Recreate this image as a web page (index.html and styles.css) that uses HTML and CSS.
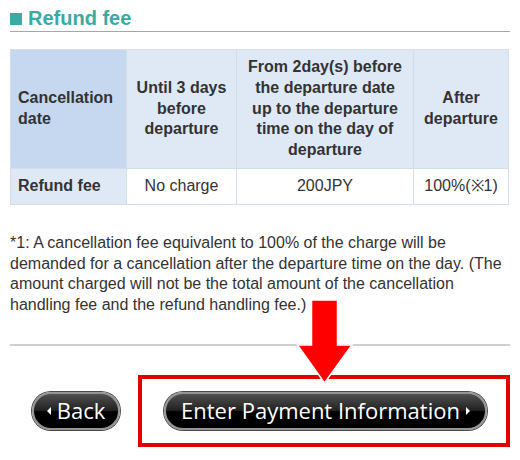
FILE: index.html
```html
<!DOCTYPE html>
<html>
<head>
  <meta charset="utf-8">
  <meta name="viewport" content="width=device-width, initial-scale=1">
  <title>Refund fee</title>
  <link rel="stylesheet" href="styles.css">
</head>
<body>
  <main class="page">
    <h2 class="section-title"><span class="mark"></span>Refund fee</h2>

    <table class="fee-table">
      <colgroup>
        <col class="c1">
        <col class="c2">
        <col class="c3">
        <col class="c4">
      </colgroup>
      <thead>
        <tr>
          <th class="label">Cancellation date</th>
          <th>Until 3 days before departure</th>
          <th>From 2day(s) before the departure date up to the departure time on the day of departure</th>
          <th>After departure</th>
        </tr>
      </thead>
      <tbody>
        <tr>
          <th class="label">Refund fee</th>
          <td>No charge</td>
          <td>200JPY</td>
          <td>100%(※1)</td>
        </tr>
      </tbody>
    </table>

    <p class="note">*1: A cancellation fee equivalent to 100% of the charge will be demanded for a cancellation after the departure time on the day. (The amount charged will not be the total amount of the cancellation handling fee and the refund handling fee.)</p>

    <hr class="divider">

    <div class="actions">
      <a class="btn btn-back" href="#"><span class="tri tri-left"></span>Back</a>
      <div class="highlight">
        <a class="btn btn-next" href="#">Enter Payment Information<span class="tri tri-right"></span></a>
      </div>
    </div>

    <!-- red pointer over the next button -->
    <svg class="pointer" width="56" height="84" viewBox="0 0 56 84">
      <path d="M14.5 0 H40.5 V45 H55 L27.5 83 L0.5 45 H14.5 Z" fill="#f00" stroke="#fff" stroke-width="1.5" stroke-linejoin="miter"/>
    </svg>
  </main>
</body>
</html>
```

FILE: styles.css
```css
* {
  box-sizing: border-box;
}

body {
  margin: 0;
  background: #fff;
  color: #333;
  font-family: "Liberation Sans", Arial, sans-serif;
  font-size: 16px;
}

.page {
  position: relative;
  padding: 0 10px;
}

.section-title {
  margin: 6px 0 0;
  padding-bottom: 1px;
  font-size: 20px;
  line-height: 24px;
  font-weight: bold;
  color: #3aaba3;
  border-bottom: 1px solid #a6a6a6;
}

.mark {
  display: inline-block;
  width: 12px;
  height: 12px;
  margin-right: 6px;
  background: #3aaba3;
}

.fee-table {
  margin-top: 17px;
  width: 498px;
  table-layout: fixed;
  border-collapse: collapse;
  line-height: 20.8px;
}

.c1 { width: 116px; }
.c2 { width: 110px; }
.c3 { width: 177px; }
.c4 { width: 95px; }

.fee-table th,
.fee-table td {
  border: 1px solid #d5dde8;
  padding: 7px 9px;
  text-align: center;
  vertical-align: middle;
}

.fee-table thead th {
  background: #dfe8f5;
}

.fee-table thead th.label {
  background: #c6d8f0;
}

.fee-table th.label {
  text-align: left;
  padding-left: 7px;
}

.fee-table tbody th.label {
  background: #dfe8f5;
}

.fee-table td {
  background: #fff;
}

.note {
  margin: 28px 0 0;
  line-height: 20.8px;
}

.divider {
  margin: 28px 0 0;
  border: 0;
  border-top: 2px solid #cfcfcf;
  height: 0;
}

.actions {
  display: flex;
  align-items: center;
  gap: 18px;
  margin-top: 29px;
  padding-left: 22px;
}

.highlight {
  flex: 1;
  border: 4px solid #e20000;
  padding: 13px 0 13px 22px;
}

.btn {
  display: flex;
  align-items: center;
  justify-content: center;
  gap: 6px;
  height: 38px;
  border: 2px solid #959595;
  border-radius: 19px;
  box-shadow: 0 0 0 1px #4a4a4a;
  background: linear-gradient(#505050, #222 48%, #000 52%, #000);
  color: #fff;
  text-decoration: none;
  font-family: "Open Sans", "DejaVu Sans", sans-serif;
  font-size: 22px;
  line-height: 1;
}

.btn-back {
  width: 88px;
  padding-bottom: 2px;
}

.btn-next {
  width: 323px;
  padding-bottom: 2px;
}

.tri {
  display: inline-block;
  width: 0;
  height: 0;
  border-top: 4px solid transparent;
  border-bottom: 4px solid transparent;
  margin-top: 3px;
}

.tri-left {
  border-right: 4px solid #fff;
}

.tri-right {
  border-left: 4px solid #fff;
}

.pointer {
  position: absolute;
  left: 297px;
  top: 294px;
  overflow: visible;
}
```
